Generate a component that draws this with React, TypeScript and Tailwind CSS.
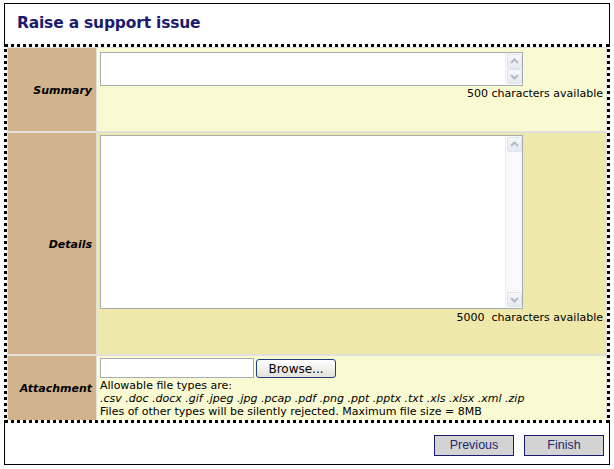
import React from 'react';

const FILE_TYPES = '.csv .doc .docx .gif .jpeg .jpg .pcap .pdf .png .ppt .pptx .txt .xls .xlsx .xml .zip';

const Arrow = ({ up }: { up?: boolean }) => (
    <div className="w-[15px] h-[15px] rounded-[2px] border border-[#e1e4ec] bg-gradient-to-b from-[#f7f8fb] to-[#e6e9f0] flex items-center justify-center">
        <svg width="11" height="11" viewBox="0 0 11 11">
            <path
                d={up ? 'M2 7 L5.5 3.5 L9 7' : 'M2 4 L5.5 7.5 L9 4'}
                fill="none"
                stroke="#b4b9c6"
                strokeWidth="2"
            />
        </svg>
    </div>
);

const TextBox = ({ height }: { height: string }) => (
    <div className={`flex w-[423px] ${height} border border-[#a5acb2] bg-white`}>
        <textarea className="flex-1 resize-none outline-none overflow-hidden bg-white" />
        <div className="w-[17px] bg-[#f9f9fc] border-l border-[#eeeef2] flex flex-col justify-between p-[1px]">
            <Arrow up />
            <Arrow />
        </div>
    </div>
);

const Label = ({ children }: { children: React.ReactNode }) => (
    <div className="bg-[#d2b48c] flex items-center justify-end pr-[4px] pt-[3px] text-[11px] font-bold italic text-black">
        {children}
    </div>
);

export default function App() {
    return (
        <div className="pl-[4px] pt-[3px] font-['DejaVu_Sans',sans-serif] text-black">
            <div className="w-[606px]">
                <div className="h-[41px] border border-b-0 border-black pl-[12px] pt-[9px]">
                    <h1 className="text-[15.5px] leading-[20px] tracking-[-0.2px] font-bold text-[#1b1b6e]">Raise a support issue</h1>
                </div>

                <div className="border-[3px] border-dotted border-black">
                    <div className="grid grid-cols-[88px_1fr] grid-rows-[83px_221px_64px] gap-x-[1px] gap-y-[2px] bg-[#e3dfdb] pt-[1px] px-[1px]">
                        <Label>Summary</Label>
                        <div className="bg-[#fafad2] pl-[3px] pr-[3px] pt-[4px]">
                            <TextBox height="h-[34px]" />
                            <div className="text-right text-[11px] leading-[16px]">500 characters available</div>
                        </div>

                        <Label>Details</Label>
                        <div className="bg-[#eee8aa] pl-[3px] pr-[3px] pt-[2px]">
                            <TextBox height="h-[174px]" />
                            <div className="text-right text-[11px] leading-[17px]">5000&nbsp; characters available</div>
                        </div>

                        <Label>Attachment</Label>
                        <div className="bg-[#fafad2] pl-[3px] pt-[2px] text-[11px] leading-[13px]">
                            <div className="flex items-start gap-[2px]">
                                <input type="text" className="w-[154px] h-[20px] border border-[#a5acb2] bg-white outline-none" />
                                <button className="mt-[1px] w-[80px] h-[19px] rounded-[3px] border border-[#1f3f7a] bg-gradient-to-b from-white to-[#e4e2da] text-[12px] leading-[16px] text-black">
                                    Browse...
                                </button>
                            </div>
                            <div className="mt-[1px]">Allowable file types are:</div>
                            <div className="italic">{FILE_TYPES}</div>
                            <div>Files of other types will be silently rejected. Maximum file size = 8MB</div>
                        </div>
                    </div>
                </div>

                <div className="h-[42px] border border-t-0 border-black flex justify-end gap-[10px] pr-[5px] pt-[12px]">
                    <button className="w-[80px] h-[21px] bg-[#d3d3d3] border border-[#1b1b6e] text-[12.5px] leading-[19px] text-[#1b2a6e] font-['Liberation_Sans',sans-serif]">
                        Previous
                    </button>
                    <button className="w-[80px] h-[21px] bg-[#d3d3d3] border border-[#1b1b6e] text-[12.5px] leading-[19px] text-[#1b2a6e] font-['Liberation_Sans',sans-serif]">
                        Finish
                    </button>
                </div>
            </div>
        </div>
    );
}
